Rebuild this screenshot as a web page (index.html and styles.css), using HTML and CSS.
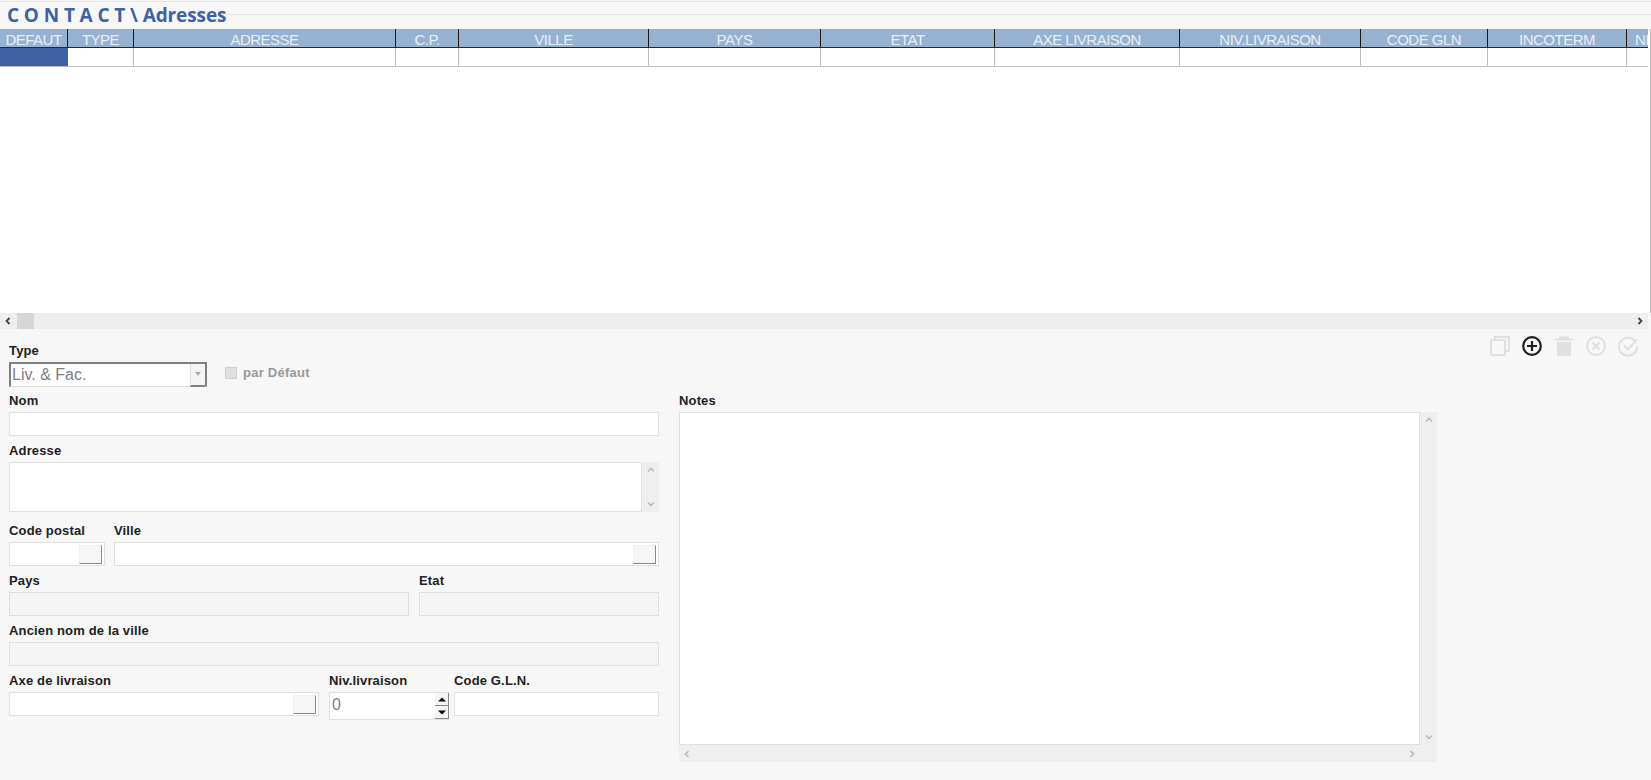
FILE: index.html
```html
<!DOCTYPE html>
<html lang="fr">
<head>
<meta charset="utf-8">
<title>Contact - Adresses</title>
<link rel="stylesheet" href="styles.css">
</head>
<body>
<div class="page">
  <div class="titlebar"><h1 class="title">C O N T A C T \ Adresses</h1></div>
  <div class="grid">
    <div class="grid-head">
      <div class="th">DEFAUT</div><div class="th">TYPE</div><div class="th">ADRESSE</div><div class="th">C.P.</div><div class="th">VILLE</div><div class="th">PAYS</div><div class="th">ETAT</div><div class="th">AXE LIVRAISON</div><div class="th">NIV.LIVRAISON</div><div class="th">CODE GLN</div><div class="th">INCOTERM</div><div class="th th-clip">NI</div>
    </div>
    <div class="grid-row">
      <div class="td td-sel"></div><div class="td"></div><div class="td"></div><div class="td"></div><div class="td"></div><div class="td"></div><div class="td"></div><div class="td"></div><div class="td"></div><div class="td"></div><div class="td"></div><div class="td"></div>
    </div>
  </div>
  <div class="hscroll">
    <svg class="arrow" viewBox="0 0 8 8" width="8" height="8"><path d="M5.5 1 2.5 4l3 3" fill="none" stroke="#444" stroke-width="1.8"/></svg>
    <span class="thumb"></span>
    <svg class="arrow arrow-end" viewBox="0 0 8 8" width="8" height="8"><path d="M2.5 1l3 3-3 3" fill="none" stroke="#444" stroke-width="1.8"/></svg>
  </div>
  <div class="form">
    <div class="top-row">
      <div class="type-field">
        <label class="label">Type</label>
        <div class="select">
          <span class="select-text">Liv. &amp; Fac.</span>
          <span class="select-btn"><svg viewBox="0 0 8 5" width="8" height="5"><path d="M1 0h6L4 4z" fill="#aaa"/></svg></span>
        </div>
      </div>
      <div class="default-check"><span class="checkbox"></span><span class="check-label">par Défaut</span></div>
      <div class="toolbar">
        <svg class="tool" viewBox="0 0 22 22" width="22" height="22" fill="none" stroke="#e0e0e0" stroke-width="2"><rect x="2" y="5" width="14" height="15" rx="1"/><path d="M6 5V2h14v14h-4"/></svg>
        <svg class="tool" viewBox="0 0 22 22" width="22" height="22" fill="none" stroke="#1f1f1f" stroke-width="2.2"><circle cx="11" cy="11" r="8.8"/><path d="M11 6v10M6 11h10"/></svg>
        <svg class="tool" viewBox="0 0 22 22" width="22" height="22"><path d="M6 1.500h10v2h4v2H2v-2h4zM4 7h14v14H4z" fill="#e0e0e0"/></svg>
        <svg class="tool" viewBox="0 0 22 22" width="22" height="22" fill="none" stroke="#e0e0e0" stroke-width="2"><circle cx="11" cy="11" r="9"/><path d="M7.500 7.500l7 7m0-7l-7 7"/></svg>
        <svg class="tool" viewBox="0 0 22 22" width="22" height="22" fill="none" stroke="#e0e0e0" stroke-width="2"><path d="M19 7.500A9 9 0 1 0 20 11"/><path d="M7 10.500l4 4 9-10"/></svg>
      </div>
    </div>
    <div class="columns">
      <div class="col-left">
        <div class="field">
          <label class="label">Nom</label>
          <div class="input"></div>
        </div>
        <div class="field field-tall">
          <label class="label">Adresse</label>
          <div class="textarea-wrap">
            <div class="textarea"></div>
            <div class="vscroll">
              <svg viewBox="0 0 8 8" width="8" height="8"><path d="M1 5.500l3-3 3 3" fill="none" stroke="#bbb" stroke-width="1.600"/></svg>
              <svg viewBox="0 0 8 8" width="8" height="8"><path d="M1 2.500l3 3 3-3" fill="none" stroke="#bbb" stroke-width="1.600"/></svg>
            </div>
          </div>
        </div>
        <div class="row row-cp">
          <div class="field">
            <label class="label">Code postal</label>
            <div class="input input-btn"><span class="pick"></span></div>
          </div>
          <div class="field">
            <label class="label">Ville</label>
            <div class="input input-btn"><span class="pick"></span></div>
          </div>
        </div>
        <div class="row row-pays">
          <div class="field">
            <label class="label">Pays</label>
            <div class="input input-off"></div>
          </div>
          <div class="field">
            <label class="label">Etat</label>
            <div class="input input-off"></div>
          </div>
        </div>
        <div class="field">
          <label class="label">Ancien nom de la ville</label>
          <div class="input input-off"></div>
        </div>
        <div class="row row-axe">
          <div class="field">
            <label class="label">Axe de livraison</label>
            <div class="input input-btn"><span class="pick"></span></div>
          </div>
          <div class="field">
            <label class="label">Niv.livraison</label>
            <div class="spin">
              <span class="spin-value">0</span>
              <span class="spin-btns">
                <span class="spin-btn"><svg viewBox="0 0 8 5" width="8" height="5"><path d="M4 0.500 8 4.500H0z" fill="#000"/></svg></span>
                <span class="spin-btn"><svg viewBox="0 0 8 5" width="8" height="5"><path d="M0 0.500h8L4 4.500z" fill="#000"/></svg></span>
              </span>
            </div>
          </div>
          <div class="field">
            <label class="label">Code G.L.N.</label>
            <div class="input"></div>
          </div>
        </div>
      </div>
      <div class="col-notes">
        <label class="label">Notes</label>
        <div class="notes-wrap">
          <div class="notes-main">
            <div class="notes"></div>
            <div class="notes-hbar">
              <svg viewBox="0 0 8 8" width="8" height="8"><path d="M5.500 1 2.500 4l3 3" fill="none" stroke="#bbb" stroke-width="1.600"/></svg>
              <svg viewBox="0 0 8 8" width="8" height="8"><path d="M2.500 1l3 3-3 3" fill="none" stroke="#bbb" stroke-width="1.600"/></svg>
            </div>
          </div>
          <div class="notes-vbar">
            <svg viewBox="0 0 8 8" width="8" height="8"><path d="M1 5.500l3-3 3 3" fill="none" stroke="#bbb" stroke-width="1.600"/></svg>
            <svg viewBox="0 0 8 8" width="8" height="8"><path d="M1 2.500l3 3 3-3" fill="none" stroke="#bbb" stroke-width="1.600"/></svg>
          </div>
        </div>
      </div>
    </div>
  </div>
</div>
</body>
</html>
```

FILE: styles.css
```css
* { box-sizing: border-box; }
html, body { margin: 0; padding: 0; height: 100%; overflow: hidden; }
body { background: #f7f7f7; font-family: "Liberation Sans", Arial, sans-serif; color: #222; }
.page { width: 1651px; height: 780px; display: flex; flex-direction: column; overflow: hidden; }

.titlebar { height: 29px; padding-top: 3px; background: linear-gradient(#e2e2e2, #e2e2e2) 0 1px / 100% 1px no-repeat, linear-gradient(#e2e2e2, #e2e2e2) 0 14px / 100% 1px no-repeat, #f7f7f7; }
.title { display: inline-block; margin: 0; padding: 0 0 0 7px; background: #f7f7f7; font: 700 19px/24px "Open Sans", sans-serif; letter-spacing: -0.1px; color: #3f62a6; }

.grid { height: 284px; margin-right: 3px; background: #fff; overflow: hidden; box-shadow: 2px 0 0 0 #fff, 3px 0 0 0 #bbb; }
.grid-head, .grid-row { display: grid; grid-template-columns: 68px 66px 262px 63px 190px 172px 174px 185px 181px 127px 139px 21px; }
.grid-head { height: 19px; background: #97b2d1; border-bottom: 1px solid #1d2b3a; }
.th { height: 18px; border-right: 1px solid #1a1a1a; color: #e9eff6; font-size: 15px; letter-spacing: -0.5px; line-height: 21px; text-align: center; overflow: hidden; white-space: nowrap; }
.th-clip { border-right: 0; text-align: left; padding-left: 8px; }
.grid-row { height: 19px; border-bottom: 1px solid #bdbdbd; }
.td { border-right: 1px solid #bdbdbd; }
.td:last-child { border-right: 0; }
.td-sel { background: #3f62a6; border-right: 0; }

.hscroll { height: 16px; margin-right: 3px; background: #eeeeee; display: flex; align-items: center; padding: 0 4px 0 4px; }
.thumb { width: 17px; height: 16px; margin-left: 5px; background: #d6d6d6; }
.arrow-end { margin-left: auto; }

.form { flex: 1; padding: 13px 0 0 9px; display: flex; flex-direction: column; }
.top-row { display: flex; height: 50px; }
.type-field { width: 198px; }
.label { display: block; height: 20px; font-size: 13px; font-weight: 700; line-height: 18px; letter-spacing: 0.15px; color: #222; white-space: nowrap; }
.select { height: 25px; display: flex; background: #fff; border-top: 2px solid #808080; border-left: 2px solid #808080; border-bottom: 1px solid #e0e0e0; border-right: 2px solid #808080; }
.select-text { flex: 1; font-size: 16px; line-height: 21px; color: #808080; padding-left: 1px; }
.select-btn { width: 15px; margin-bottom: -1px; background: #f4f4f4; border-left: 1px solid #ddd; border-bottom: 2px solid #808080; display: flex; align-items: center; justify-content: center; }
.default-check { display: flex; align-items: center; align-self: flex-start; margin: 23px 0 0 18px; }
.checkbox { width: 12px; height: 12px; background: #e0e0e0; border: 1px solid #d0d0d0; }
.check-label { margin-left: 6px; font-size: 13px; font-weight: 700; letter-spacing: 0.25px; color: #9a9a9a; }
.toolbar { margin-left: auto; margin-top: -7px; margin-right: 12px; height: 24px; display: flex; gap: 10px; }
.tool { flex: none; width: 22px; height: 22px; }

.columns { display: flex; gap: 20px; flex: 1; }
.col-left { width: 650px; }
.col-notes { width: 758px; }
.field { display: block; margin-bottom: 6px; }
.field-tall { margin-bottom: 10px; }
.input { height: 24px; background: #fff; border: 1px solid #e0e0e0; }
.input-off { background: #f5f5f5; }
.input-btn { display: flex; justify-content: flex-end; padding: 2px; }
.pick { width: 23px; height: 19px; background: #f6f6f6; border-right: 1px solid #888; border-bottom: 1px solid #888; border-top: 1px solid #f0f0f0; border-left: 1px solid #f0f0f0; }

.textarea-wrap { display: flex; height: 50px; }
.textarea { flex: 1; background: #fff; border: 1px solid #e0e0e0; }
.vscroll { width: 17px; background: #efefef; display: flex; flex-direction: column; justify-content: space-between; align-items: center; padding: 4px 0; }

.row { display: grid; column-gap: 10px; }
.row-cp { grid-template-columns: 96px 545px; column-gap: 9px; }
.row-pays { grid-template-columns: 400px 240px; }
.row-axe { grid-template-columns: 310px 120px 200px; }
.row-axe .field:last-child { margin-left: -5px; }

.spin { height: 28px; background: #fff; border: 1px solid #e0e0e0; border-right: 0; display: flex; justify-content: space-between; }
.spin-value { font-size: 16px; line-height: 24px; color: #808080; padding-left: 2px; }
.spin-btns { width: 14px; display: flex; flex-direction: column; }
.spin-btn { flex: 1; background: #f6f6f6; border-right: 1px solid #888; border-bottom: 1px solid #888; display: flex; align-items: center; justify-content: center; }

.notes-wrap { display: flex; height: 350px; }
.notes-main { flex: 1; display: flex; flex-direction: column; }
.notes { flex: 1; background: #fff; border: 1px solid #e0e0e0; }
.notes-hbar { height: 17px; background: #efefef; display: flex; justify-content: space-between; align-items: center; padding: 0 4px; }
.notes-vbar { width: 17px; background: #efefef; display: flex; flex-direction: column; justify-content: space-between; align-items: center; padding: 4px 0 21px; }
```
